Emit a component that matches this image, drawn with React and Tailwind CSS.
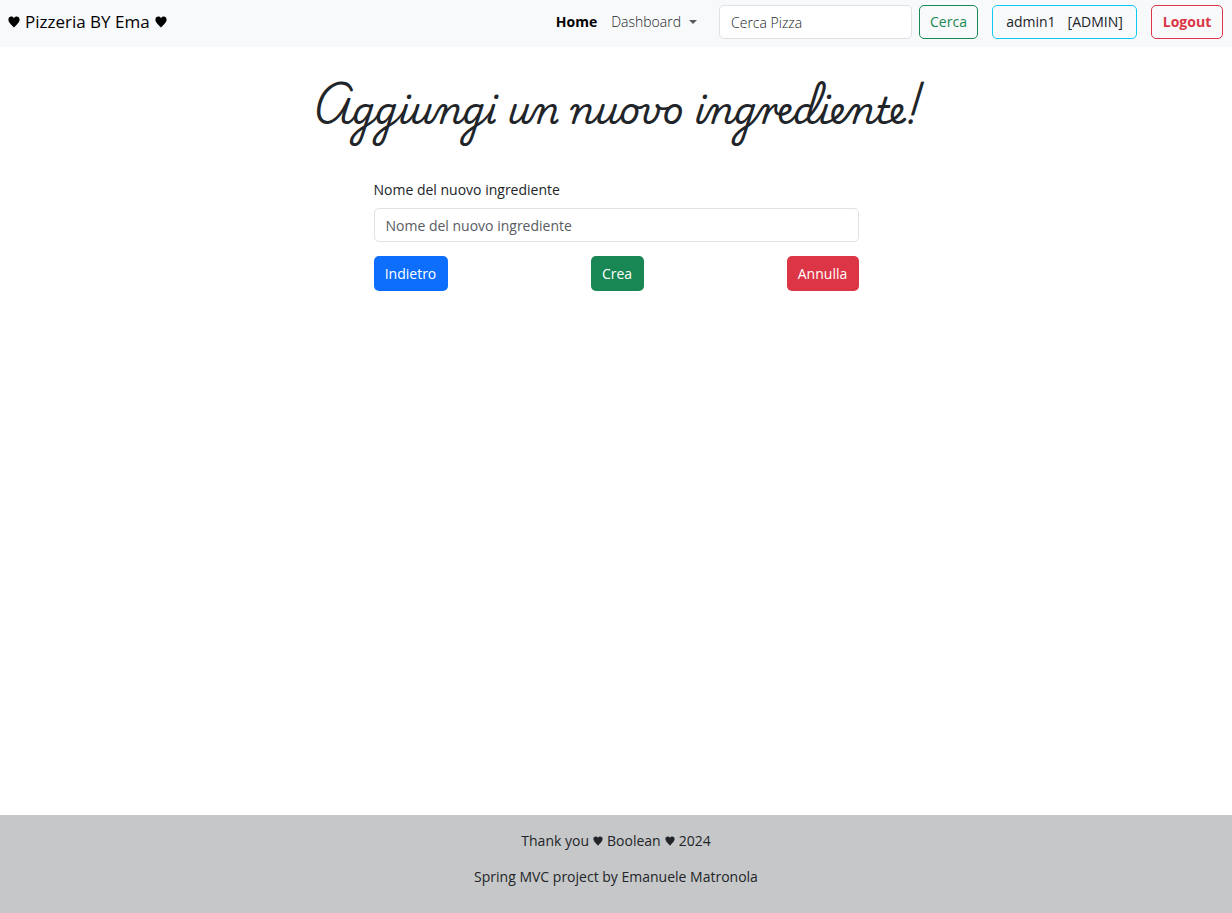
const HeartIcon = ({ className }) => (
  <svg viewBox="0 0 12 12" className={`inline-block ${className}`} fill="currentColor" role="img" aria-label="heart">
    <path d="M3.400.6C1.600.6.4 1.800.4 3.700c0 2.700 2.900 4.700 5.600 7.900 2.700-3.200 5.600-5.200 5.600-7.900C11.600 1.800 10.400.6 8.600.6 7.400.6 6.500 1.300 6 2.200 5.500 1.300 4.600.6 3.400.6z" />
  </svg>
);

export default function App() {
  return (
    <div className="flex min-h-screen flex-col bg-white font-['Segoe_UI','Selawik','Open_Sans','Noto_Sans',sans-serif] text-sm text-[#212529]">
      <nav className="flex items-center justify-between bg-[#f8f9fa] pt-[5px] pr-[9px] pb-2 pl-2">
        <a href="#" className="flex items-center gap-[5px] text-[17px] leading-6 text-black">
          <HeartIcon className="size-3" />
          <span>Pizzeria BY Ema</span>
          <HeartIcon className="size-3" />
        </a>
        <div className="flex items-center">
          <a href="#" className="font-bold text-black">Home</a>
          <button type="button" className="mr-[22px] ml-[14px] flex items-center gap-2 font-light text-[#212529]">
            Dashboard
            <svg viewBox="0 0 8 4" className="h-1 w-2" fill="#595b5d" aria-hidden="true">
              <path d="M0 0h8L4 4z" />
            </svg>
          </button>
          <form className="flex gap-[7px]" onSubmit={(e) => e.preventDefault()}>
            <input
              type="search"
              aria-label="Cerca Pizza"
              placeholder="Cerca Pizza"
              className="h-[34px] w-[193px] rounded-[5px] border border-[#dee2e6] bg-white px-[11px] font-light placeholder:text-[#212529]"
            />
            <button type="submit" className="h-[34px] w-[59px] rounded-[5px] border border-[#198754] text-[#198754]">
              Cerca
            </button>
          </form>
          <button type="button" className="mx-[14px] flex h-[34px] w-[145px] items-center justify-center gap-3 rounded-[5px] border border-[#0dcaf0] text-[#212529]">
            <span>admin1</span>
            <span>[ADMIN]</span>
          </button>
          <button type="button" className="h-[34px] w-[72px] rounded-[5px] border border-[#dc3545] font-bold text-[#dc3545]">
            Logout
          </button>
        </div>
      </nav>

      <main className="flex grow flex-col items-center">
        <h1 className="mt-[23px] text-center font-['Playwrite_CU',cursive] text-4xl leading-[72px]">
          Aggiungi un nuovo ingrediente!
        </h1>
        <form className="mt-[37px] w-full max-w-[485px]" onSubmit={(e) => e.preventDefault()}>
          <label htmlFor="name" className="block leading-[22px]">Nome del nuovo ingrediente</label>
          <input
            id="name"
            type="text"
            placeholder="Nome del nuovo ingrediente"
            className="mt-[7px] h-[34px] w-full rounded-[5px] border border-[#dee2e6] px-[11px] placeholder:text-[#595c5f]"
          />
          <div className="mt-[14px] flex justify-between text-white">
            <button type="button" className="h-[35px] w-[74px] rounded-[5px] bg-[#0d6efd]">Indietro</button>
            <button type="submit" className="h-[35px] w-[53px] rounded-[5px] bg-[#198754]">Crea</button>
            <button type="reset" className="h-[35px] w-[72px] rounded-[5px] bg-[#dc3545]">Annulla</button>
          </div>
        </form>
      </main>

      <footer className="flex flex-col items-center gap-[14px] bg-[#c6c7c8] pt-[15px] pb-[25px] leading-[22px]">
        <p className="flex items-center gap-1">
          Thank you <HeartIcon className="size-[10px]" /> Boolean <HeartIcon className="size-[10px]" /> 2024
        </p>
        <p>Spring MVC project by Emanuele Matronola</p>
      </footer>
    </div>
  );
}
